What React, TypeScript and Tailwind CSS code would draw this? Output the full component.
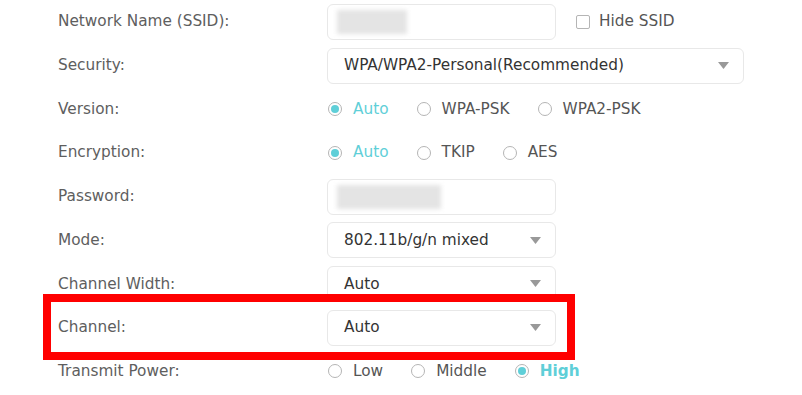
import React from "react";

const font = { fontFamily: "'DejaVu Sans', Verdana, sans-serif" };

function Radio({ label, checked, bold }: { label: string; checked?: boolean; bold?: boolean }) {
  return (
    <div className="flex items-center">
      <span className="w-[14px] h-[14px] rounded-full border border-[#b5b5b5] bg-white flex items-center justify-center">
        {checked && <span className="w-[8px] h-[8px] rounded-full bg-[#5fcfd8]" />}
      </span>
      <span className={`ml-[11px] ${checked ? "text-[#5fcfd8]" : "text-[#555]"} ${bold ? "font-bold" : ""}`}>{label}</span>
    </div>
  );
}

function Select({ value, wide }: { value: string; wide?: boolean }) {
  return (
    <div className={`${wide ? "w-[417px]" : "w-[229px]"} h-[36px] rounded-[6px] border border-[#e8e8e8] bg-white flex items-center pl-[16px] pr-[14px]`}>
      <span className="flex-1 text-[#333]">{value}</span>
      <svg width="11" height="7" viewBox="0 0 11 7">
        <path d="M0 0 L11 0 L5.5 7 Z" fill="#999" />
      </svg>
    </div>
  );
}

function Blurred({ w }: { w: number }) {
  return (
    <div className="w-[229px] h-[36px] rounded-[6px] border border-[#e8e8e8] bg-white flex items-center pl-[9px]">
      <div className="h-[24px] bg-[#e4e4e4] blur-[2px]" style={{ width: w }} />
    </div>
  );
}

function Row({ label, children }: { label: string; children: React.ReactNode }) {
  return (
    <div className="h-[43.7px] flex items-center">
      <div className="w-[269px] text-[#5e5e5e]">{label}</div>
      <div className="flex items-center">{children}</div>
    </div>
  );
}

export default function App() {
  return (
    <div className="w-[802px] h-[395px] bg-white overflow-hidden relative text-[15.3px]" style={font}>
      <div className="pl-[58px]">
        <Row label="Network Name (SSID):">
          <Blurred w={70} />
          <div className="flex items-center ml-[20px]">
            <span className="w-[14px] h-[14px] border border-[#b5b5b5] rounded-[2px] bg-white" />
            <span className="ml-[9px] text-[#555]">Hide SSID</span>
          </div>
        </Row>
        <Row label="Security:">
          <Select value="WPA/WPA2-Personal(Recommended)" wide />
        </Row>
        <Row label="Version:">
          <div className="flex items-center gap-[28px] pl-[1px]">
            <Radio label="Auto" checked />
            <Radio label="WPA-PSK" />
            <Radio label="WPA2-PSK" />
          </div>
        </Row>
        <Row label="Encryption:">
          <div className="flex items-center gap-[28px] pl-[1px]">
            <Radio label="Auto" checked />
            <Radio label="TKIP" />
            <Radio label="AES" />
          </div>
        </Row>
        <Row label="Password:">
          <Blurred w={104} />
        </Row>
        <Row label="Mode:">
          <Select value="802.11b/g/n mixed" />
        </Row>
        <Row label="Channel Width:">
          <Select value="Auto" />
        </Row>
        <Row label="Channel:">
          <Select value="Auto" />
        </Row>
        <Row label="Transmit Power:">
          <div className="flex items-center gap-[28px] pl-[1px]">
            <Radio label="Low" />
            <Radio label="Middle" />
            <Radio label="High" checked bold />
          </div>
        </Row>
      </div>
      <div className="absolute left-[43px] top-[294px] w-[532px] h-[66px] border-[8px] border-[#ff0000]" />
    </div>
  );
}
